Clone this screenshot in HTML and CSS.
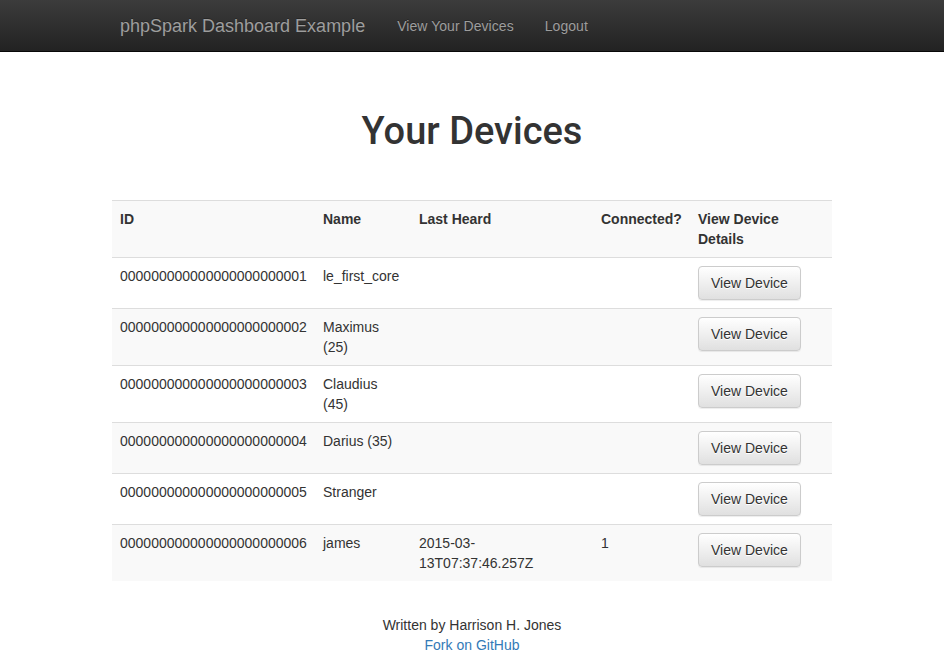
FILE: index.html
```html
<!DOCTYPE html>
<html>
<head>
<meta charset="utf-8">
<title>phpSpark Dashboard Example</title>
<link rel="stylesheet" href="styles.css">
</head>
<body>
<nav class="navbar">
  <div class="container nav-inner">
    <a class="brand" href="#">phpSpark Dashboard Example</a>
    <ul class="nav">
      <li><a href="#">View Your Devices</a></li>
      <li><a href="#">Logout</a></li>
    </ul>
  </div>
</nav>
<main class="container">
  <h1 class="title">Your Devices</h1>
  <table class="table">
    <colgroup>
      <col class="c-id"><col class="c-name"><col class="c-heard"><col class="c-conn"><col class="c-view">
    </colgroup>
    <thead>
      <tr><th>ID</th><th>Name</th><th>Last Heard</th><th>Connected?</th><th>View Device Details</th></tr>
    </thead>
    <tbody>
      <tr><td>000000000000000000000001</td><td>le_first_core</td><td></td><td></td><td><a class="btn" href="#">View Device</a></td></tr>
      <tr class="odd"><td>000000000000000000000002</td><td>Maximus (25)</td><td></td><td></td><td><a class="btn" href="#">View Device</a></td></tr>
      <tr><td>000000000000000000000003</td><td>Claudius (45)</td><td></td><td></td><td><a class="btn" href="#">View Device</a></td></tr>
      <tr class="odd"><td>000000000000000000000004</td><td>Darius (35)</td><td></td><td></td><td><a class="btn" href="#">View Device</a></td></tr>
      <tr><td>000000000000000000000005</td><td>Stranger</td><td></td><td></td><td><a class="btn" href="#">View Device</a></td></tr>
      <tr class="odd last"><td>000000000000000000000006</td><td>james</td><td>2015-03-13T07:37:46.257Z</td><td>1</td><td><a class="btn" href="#">View Device</a></td></tr>
    </tbody>
  </table>
  <footer class="footer">
    <p>Written by Harrison H. Jones</p>
    <p><a href="#" class="link">Fork on GitHub</a></p>
  </footer>
</main>
</body>
</html>
```
FILE: styles.css
```css
* { box-sizing: border-box; }
html, body { margin: 0; padding: 0; }
body {
  font-family: "Liberation Sans", Arial, Helvetica, sans-serif;
  font-size: 14px;
  line-height: 20px;
  color: #333;
  background: #fff;
}
a { text-decoration: none; }
.container {
  width: 750px;
  margin: 0 auto;
  padding: 0 15px;
}
.navbar {
  height: 52px;
  background: linear-gradient(to bottom, #3c3c3c 0, #222 100%);
  border-bottom: 1px solid #080808;
}
.nav-inner {
  display: flex;
  align-items: center;
  height: 51px;
}
.brand {
  font-size: 18px;
  line-height: 20px;
  color: #9d9d9d;
  padding: 15px 17px 15px 8px;
  text-shadow: 0 -1px 0 rgba(0,0,0,.25);
}
.nav {
  list-style: none;
  margin: 0;
  padding: 0;
  display: flex;
}
.nav a {
  display: block;
  color: #9d9d9d;
  padding: 15px 15px 15px 15px;
  line-height: 20px;
  letter-spacing: 0.05px;
  text-shadow: 0 -1px 0 rgba(0,0,0,.25);
}
.nav li + li a { padding-left: 16px; }
.title {
  font-family: Roboto, "Liberation Sans", Arial, sans-serif;
  font-size: 38px;
  font-weight: 500;
  line-height: 40px;
  text-align: center;
  margin: 59px 0 49px;
  color: #333;
}
.table {
  width: 100%;
  border-collapse: collapse;
  table-layout: fixed;
  border-spacing: 0;
}
.c-id { width: 203px; }
.c-name { width: 96px; }
.c-heard { width: 182px; }
.c-conn { width: 97px; }
.c-view { width: 142px; }
.table th, .table td {
  padding: 8px;
  text-align: left;
  vertical-align: top;
  border-top: 1px solid #ddd;
  line-height: 20px;
}
.table th {
  font-weight: bold;
  border-bottom: 1px solid #ddd;
}
.table thead tr { background: #f9f9f9; }
.table tbody tr:first-child td { border-top: 0; }
.table tr.odd { background: #f9f9f9; }
.btn {
  display: inline-block;
  padding: 6px 12px;
  font-size: 14px;
  line-height: 20px;
  color: #333;
  border: 1px solid #ccc;
  border-radius: 4px;
  background: linear-gradient(to bottom, #fff 0, #e0e0e0 100%);
  box-shadow: inset 0 1px 0 rgba(255,255,255,.15), 0 1px 1px rgba(0,0,0,.075);
  text-shadow: 0 1px 0 #fff;
  white-space: nowrap;
}
.footer {
  text-align: center;
  margin-top: 34px;
}
.footer p { margin: 0; }
.link { color: #337ab7; }
```
